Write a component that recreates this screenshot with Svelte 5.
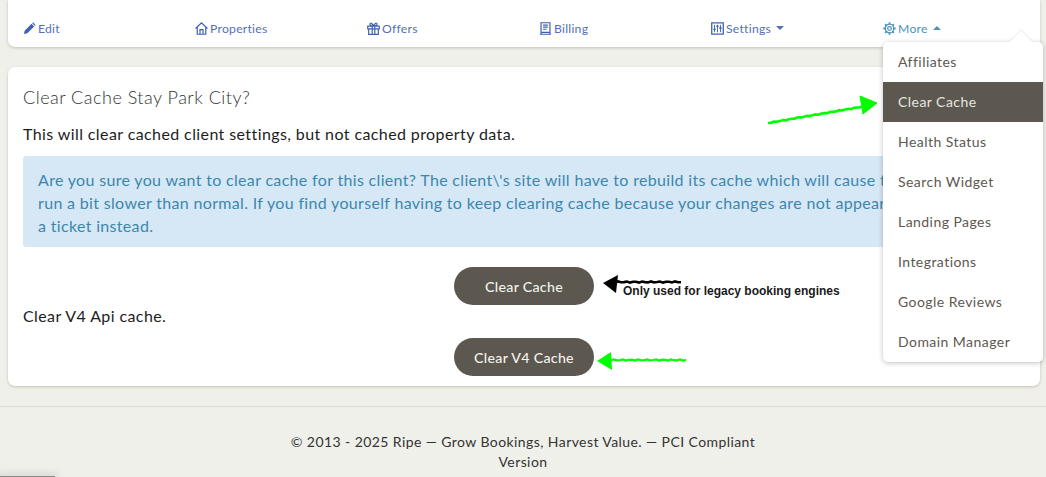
<script>
  const menu = ['Affiliates', 'Clear Cache', 'Health Status', 'Search Widget', 'Landing Pages', 'Integrations', 'Google Reviews', 'Domain Manager']

  // hand-drawn looking line, small jitter along the way
  function scribble(x1, y1, x2, y2, amp = 0.7) {
    const n = Math.round(Math.abs(x2 - x1) / 3)
    let d = `M${x1} ${y1}`
    for (let i = 1; i <= n; i++) {
      const t = i / n
      const off = Math.sin(i * 2.3) * amp
      d += `L${(x1 + (x2 - x1) * t).toFixed(1)} ${(y1 + (y2 - y1) * t + off).toFixed(1)}`
    }
    return d
  }
</script>

<div class="page">
  <div class="card tabs">
    <a class="tab">
      <svg viewBox="0 0 14 14"><path d="M1 13l.8-3.6 7.4-7.4 2.8 2.8-7.4 7.4zM9.9 1.3l.9-.9 2.8 2.8-.9.9z" fill="currentColor"/></svg>
      Edit
    </a>
    <a class="tab">
      <svg viewBox="0 0 14 14" fill="none" stroke="currentColor" stroke-width="1.3"><path d="M.6 7L7 1l6.4 6M2.4 5.6v7.6h9.2V5.6M5.4 13.2V8.2h3.2v5"/></svg>
      Properties
    </a>
    <a class="tab">
      <svg viewBox="0 0 14 14" fill="none" stroke="currentColor" stroke-width="1.3"><path d="M.8 4.4h12.4v3H.8zM1.8 7.4v6h10.4v-6M5.6 4.4v9M8.4 4.4v9M7 4.2C5.6 1.2 3.4.6 3.2 2.2 3 3.8 5 4.2 7 4.2zM7 4.2c1.4-3 3.6-3.6 3.8-2 .2 1.6-1.8 2-3.8 2z"/></svg>
      Offers
    </a>
    <a class="tab">
      <svg viewBox="0 0 14 14" fill="none" stroke="currentColor" stroke-width="1.3"><path d="M2.2.8h9.6v10.4H2.2zM1 13.2h12M2.2 11.2v2M11.8 11.2v2M4.4 3.4h5.2M4.4 5.6h5.2M4.4 7.8h3.8"/></svg>
      Billing
    </a>
    <a class="tab">
      <svg viewBox="0 0 14 14" fill="none" stroke="currentColor" stroke-width="1.4"><path d="M.8 1h12.4v12H.8z"/><path d="M3.8 3v8M7 3v8M10.2 3v8" stroke-width="1"/><path d="M2.6 7.8h2.4M5.8 4.6h2.4M9 6.6h2.4" stroke-width="1.8"/></svg>
      Settings <i class="caret"></i>
    </a>
    <a class="tab active">
      <svg viewBox="0 0 14 14" fill="none" stroke="currentColor"><circle cx="7" cy="7" r="2" stroke-width="1.3"/><circle cx="7" cy="7" r="4.6" stroke-width="1.3"/><path d="M7 .4v2M7 11.6v2M.4 7h2M11.6 7h2M2.3 2.3l1.5 1.5M10.2 10.2l1.5 1.5M2.3 11.7l1.5-1.5M10.2 3.8l1.5-1.5" stroke-width="1.9"/></svg>
      More <i class="caret up"></i>
    </a>
  </div>

  <div class="card body">
    <h4>Clear Cache Stay Park City?</h4>
    <p>This will clear cached client settings, but not cached property data.</p>
    <div class="alert">
      Are you sure you want to clear cache for this client? The client\'s site will have to rebuild its cache which will cause the site to<br />
      run a bit slower than normal. If you find yourself having to keep clearing cache because your changes are not appearing, submit<br />
      a ticket instead.
    </div>
    <div class="action first"><button>Clear Cache</button></div>
    <p class="v4">Clear V4 Api cache.</p>
    <div class="action"><button>Clear V4 Cache</button></div>
  </div>

  <footer>
    <div>© 2013 - 2025 Ripe — Grow Bookings, Harvest Value. — PCI Compliant</div>
    <div>Version</div>
  </footer>

  <div class="dropdown">
    <span class="notch"></span>
    {#each menu as item}
      <div class="item" class:selected={item === 'Clear Cache'}>{item}</div>
    {/each}
  </div>

  <!-- arrows drawn on top of the screenshot -->
  <svg class="marks" viewBox="0 0 1046 477" width="1046" height="477" fill="none">
    <path d={scribble(768, 123, 866, 106, 0.5)} stroke="#0f0" stroke-width="2.6"/>
    <path d="M860 96L877 103L863 114Z" fill="#0f0" stroke="#0f0"/>
    <path d={scribble(612, 282, 681, 282, 0.6)} stroke="#000" stroke-width="2.6"/>
    <path d="M603 283L618 275L616 293Z" fill="#000"/>
    <path d={scribble(608, 360, 686, 360, 0.6)} stroke="#0f0" stroke-width="2.2"/>
    <path d="M597 361L611 352L612 370Z" fill="#0f0"/>
  </svg>
  <div class="note">Only used for legacy booking engines</div>

  <div class="blob"></div>
</div>

<style>
  :global(body) {
    margin: 0;
    background: #f0f0ea;
    overflow: hidden;
  }
  .page {
    position: relative;
    height: 477px;
    overflow: hidden;
    font-family: Lato, 'Liberation Sans', sans-serif;
    color: #222;
  }
  .card {
    background: #fff;
    border-radius: 7px;
    margin: 0 6px 0 8px;
    box-shadow: 0 1px 3px rgba(120, 110, 80, 0.35);
  }
  .tabs {
    display: grid;
    grid-template-columns: repeat(6, 172px);
    height: 47px;
    box-sizing: border-box;
    padding-top: 20px;
    border-radius: 0 0 7px 7px;
  }
  .tab {
    display: flex;
    align-items: center;
    gap: 2px;
    height: 16px;
    padding-left: 15px;
    font-size: 12.2px;
    letter-spacing: 0.25px;
    color: #5470b8;
  }
  .tab svg {
    width: 13px;
    height: 13px;
    color: #3f62b5;
    flex: none;
  }
  .tab.active,
  .tab.active svg {
    color: #4b93b8;
  }
  .caret {
    display: inline-block;
    margin-left: 3px;
    border-left: 4px solid transparent;
    border-right: 4px solid transparent;
    border-top: 4px solid currentColor;
  }
  .caret.up {
    border-top: 0;
    border-bottom: 4px solid currentColor;
  }
  .body {
    margin-top: 20px;
    height: 319px;
    box-sizing: border-box;
    padding: 18px 15px 0;
  }
  h4 {
    margin: 0;
    font-size: 18px;
    font-weight: 300;
    line-height: 24px;
    letter-spacing: 0.5px;
    color: #333;
  }
  p {
    margin: 0;
    font-size: 16px;
    line-height: 22px;
    letter-spacing: 0.4px;
    color: #1d1d1d;
  }
  h4 + p {
    margin-top: 14px;
  }
  .alert {
    margin: 11px 0 0;
    height: 91px;
    box-sizing: border-box;
    padding: 12px 15px;
    background: #d6e7f5;
    border-radius: 3px;
    font-size: 16px;
    line-height: 23px;
    letter-spacing: 0.33px;
    color: #3c88ad;
    white-space: nowrap;
    overflow: hidden;
  }
  .action {
    display: flex;
    justify-content: center;
  }
  .action.first {
    margin-top: 20px;
  }
  .v4 {
    margin-top: -1px;
    height: 34px;
    line-height: 24px;
  }
  button {
    width: 140px;
    height: 38px;
    border: 0;
    border-radius: 19px;
    background: #5c5850;
    color: #f4f2ee;
    font: 500 14.2px Lato, sans-serif;
    letter-spacing: 0.3px;
  }
  footer {
    margin-top: 20px;
    border-top: 1px solid #dbdbd4;
    padding-top: 25px;
    text-align: center;
    font-size: 14px;
    line-height: 20px;
    letter-spacing: 0.42px;
    color: #333;
  }
  .dropdown {
    position: absolute;
    left: 883px;
    top: 42px;
    width: 160px;
    background: #fff;
    border-radius: 5px;
    box-shadow: 0 1px 5px rgba(0, 0, 0, 0.25);
  }
  .notch {
    position: absolute;
    top: -8px;
    right: 14px;
    width: 16px;
    height: 16px;
    background: #fff;
    transform: rotate(45deg);
    box-shadow: -1px -1px 1px rgba(180, 170, 130, 0.2);
  }
  .item {
    position: relative;
    height: 40px;
    line-height: 40px;
    padding-left: 15px;
    font-size: 14px;
    letter-spacing: 0.45px;
    color: #5c5850;
  }
  .item.selected {
    background: #5c5850;
    color: #e8e6e0;
  }
  .marks {
    position: absolute;
    left: 0;
    top: 0;
    pointer-events: none;
  }
  .note {
    position: absolute;
    left: 623px;
    top: 284px;
    font: 700 12px 'Liberation Sans', sans-serif;
    line-height: 14px;
    color: #1a1a1a;
  }
  .blob {
    position: absolute;
    left: 0;
    bottom: 0;
    width: 55px;
    height: 1px;
    background: #8a8a86;
    box-shadow: 0 0 7px 3px rgba(0, 0, 0, 0.1);
  }
</style>
